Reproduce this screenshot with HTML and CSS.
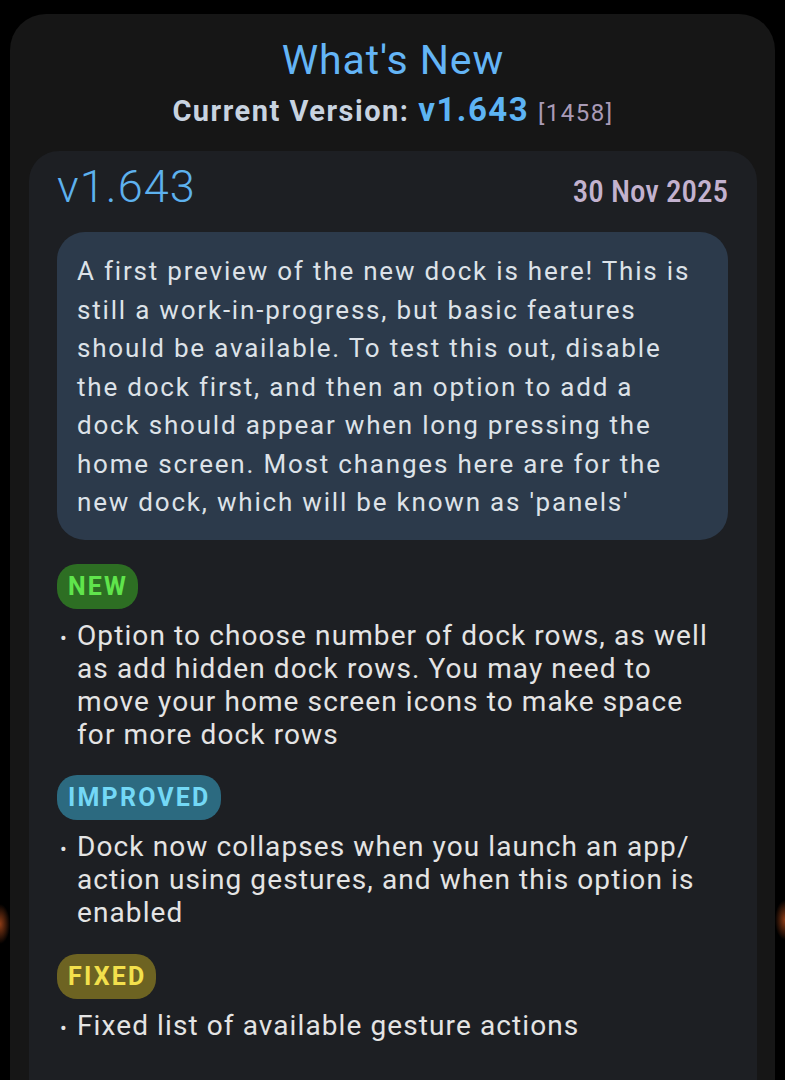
FILE: index.html
```html
<!DOCTYPE html>
<html>
<head>
<meta name="viewport" content="width=device-width, initial-scale=1">
<link rel="stylesheet" href="styles.css">
</head>
<body>

<div class="sheet">
  <h1 class="title">What's New</h1>
  <div class="current">
    Current Version: <span class="current-ver">v1.643</span> <span class="current-build">[1458]</span>
  </div>

  <!-- one release -->
  <div class="release">
    <div class="release-head">
      <span class="release-ver">v1.643</span>
      <span class="release-date">30 Nov 2025</span>
    </div>

    <div class="release-note">
      A first preview of the new dock is here! This is still a work-in-progress, but basic features should be available. To test this out, disable the dock first, and then an option to add a dock should appear when long pressing the home screen. Most changes here are for the new dock, which will be known as 'panels'
    </div>

    <span class="tag tag-new">NEW</span>
    <ul class="changes">
      <li>Option to choose number of dock rows, as well as add hidden dock rows. You may need to move your home screen icons to make space for more dock rows</li>
    </ul>

    <span class="tag tag-improved">IMPROVED</span>
    <ul class="changes">
      <li>Dock now collapses when you launch an app/ action using gestures, and when this option is enabled</li>
    </ul>

    <span class="tag tag-fixed">FIXED</span>
    <ul class="changes">
      <li>Fixed list of available gesture actions</li>
    </ul>
  </div>
</div>

</body>
</html>
```

FILE: styles.css
```css
body {
  margin: 0;
  background:
    radial-gradient(ellipse 10px 20px at 0 924px, #8e3c16, transparent),
    radial-gradient(ellipse 10px 20px at 100% 920px, #8e3c16, transparent),
    #000;
  font-family: Roboto, "Noto Sans", sans-serif;
}

.sheet {
  margin: 14px 10px 0;
  padding: 22px 18px 0 19px;
  background: #161616;
  border-radius: 36px 36px 0 0;
}

.title {
  margin: 0;
  font-size: 41px;
  line-height: 48px;
  font-weight: 400;
  letter-spacing: 0.9px;
  color: #64b5f6;
  text-align: center;
}

.current {
  margin-top: 6px;
  font-size: 29px;
  line-height: 40px;
  font-weight: 700;
  letter-spacing: 1.5px;
  color: #c8d3e0;
  text-align: center;
}

.current-ver {
  font-size: 33px;
  color: #5db4f4;
}

.current-build {
  font-size: 24px;
  font-weight: 400;
  color: #a99bb6;
}

.release {
  margin-top: 18px;
  padding: 10px 29px 36px 28px;
  background: #1d1f23;
  border-radius: 30px 30px 0 0;
}

.release-head {
  display: flex;
  justify-content: space-between;
  align-items: baseline;
}

.release-ver {
  font-size: 45px;
  line-height: 52px;
  font-weight: 300;
  letter-spacing: 1.1px;
  color: #5db1ee;
}

.release-date {
  font-size: 31px;
  font-weight: 500;
  font-stretch: 82%;
  color: #c3b2cf;
}

.release-note {
  margin-top: 19px;
  padding: 20px 28px 18px 20px;
  background: #2c3a4b;
  border-radius: 28px;
  font-size: 26px;
  line-height: 38.5px;
  letter-spacing: 1.8px;
  color: #dde2e8;
}

.tag {
  display: inline-block;
  margin-top: 24px;
  padding: 0 10px 0 11px;
  height: 45px;
  line-height: 45px;
  border-radius: 20px;
  font-size: 25px;
  font-weight: 700;
  letter-spacing: 2.2px;
}

.tag-new {
  background: #2d6e23;
  color: #60e54c;
}

.tag-improved {
  background: #2c6a80;
  color: #73d8f6;
}

.tag-fixed {
  margin-top: 25px;
  background: #6d6322;
  color: #f3e04c;
}

.changes {
  margin: 10px 0 0;
  padding: 0;
  list-style: none;
}

.changes li {
  display: flex;
  align-items: baseline;
  font-size: 28px;
  line-height: 33px;
  letter-spacing: 1.1px;
  color: #e4e4e4;
}

.changes li::before {
  content: "\2022";
  flex: none;
  width: 17px;
  padding-left: 3px;
  font-size: 20px;
  letter-spacing: 0;
}
```
